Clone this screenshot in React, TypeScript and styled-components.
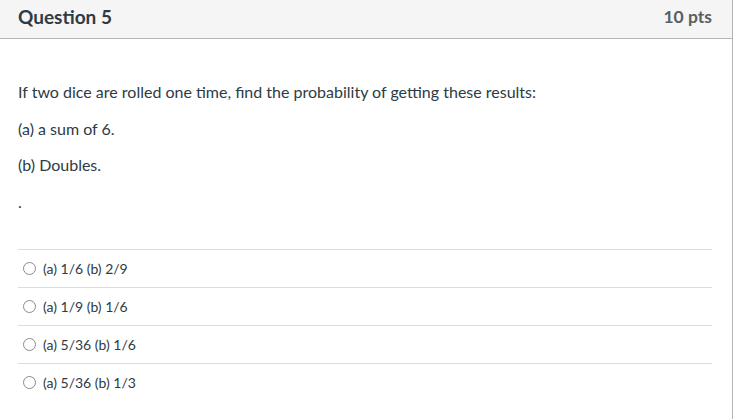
import React from "react";
import styled, { createGlobalStyle } from "styled-components";

const Global = createGlobalStyle`
  html, body { margin: 0; padding: 0; background: #fff; }
  body { font-family: Lato, "Open Sans", "Liberation Sans", sans-serif; color: #2d3b45; }
`;

const Card = styled.div`
  width: 732px;
  margin: -1px 0 0 -1px;
  border: 1px solid #b4b4b4;
  background: #fff;
  min-height: 440px;
`;

const Header = styled.div`
  height: 39px;
  box-sizing: border-box;
  background: #f5f5f5;
  border-bottom: 1px solid #b4b4b4;
  display: flex;
  align-items: center;
  justify-content: space-between;
  padding: 0 20px 5px 18px;
`;

const Title = styled.div`
  font-size: 19px;
  font-weight: 700;
  color: #2d3b45;
`;

const Points = styled.div`
  font-size: 17.5px;
  font-weight: 700;
  color: #575f65;
`;

const Body = styled.div`
  padding: 41px 20px 0 18px;
`;

const Para = styled.p`
  margin: 0 0 12.5px;
  font-size: 16px;
  line-height: 24px;
  color: #2d3b45;
`;

const Answers = styled.div`
  margin-top: 35px;
`;

const Row = styled.label`
  height: 38px;
  box-sizing: border-box;
  border-top: 1px solid #dcdcdc;
  display: flex;
  align-items: center;
  gap: 7px;
  padding-left: 5px;
  font-size: 14px;
  color: #2d3b45;
`;

const Radio = styled.span`
  width: 11px;
  height: 11px;
  border-radius: 50%;
  border: 1px solid #8a8a8a;
  background: #fff;
  flex: none;
`;

const answers = ["(a) 1/6 (b) 2/9", "(a) 1/9 (b) 1/6", "(a) 5/36 (b) 1/6", "(a) 5/36 (b) 1/3"];

export default function App() {
  return (
    <>
      <Global />
      <Card>
        <Header>
          <Title>Question 5</Title>
          <Points>10 pts</Points>
        </Header>
        <Body>
          <Para>If two dice are rolled one time, find the probability of getting these results:</Para>
          <Para>(a) a sum of 6.</Para>
          <Para>(b) Doubles.</Para>
          <Para>.</Para>
          <Answers>
            {answers.map((a) => (
              <Row key={a}>
                <Radio />
                <span>{a}</span>
              </Row>
            ))}
          </Answers>
        </Body>
      </Card>
    </>
  );
}
